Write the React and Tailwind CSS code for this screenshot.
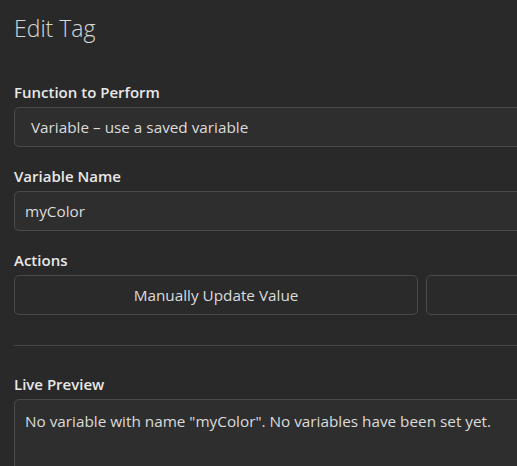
export default function App() {
  const font = { fontFamily: '"Open Sans", "Noto Sans", sans-serif' }

  return (
    <div style={font} className="h-[466px] w-[517px] overflow-hidden bg-[#292929] text-[#dcdcdc]">
      <div className="w-[844px] px-[14px] pt-[12px]">
        <h1 className="text-[23px] font-light leading-[32px] text-[#d6d6d6]">Edit Tag</h1>

        <div className="mt-[38px]">
          <label className="block text-[15px] font-semibold leading-[20px] text-[#e8e8e8]">Function to Perform</label>
          <div className="mt-[5px] flex h-[40px] items-center rounded-[5px] border border-[#4a4a4a] bg-[#2e2e2e] pl-[16px] text-[15.3px]">
            Variable – use a saved variable
          </div>
        </div>

        <div className="mt-[19px]">
          <label className="block text-[15px] font-semibold leading-[20px] text-[#e8e8e8]">Variable Name</label>
          <div className="mt-[5px] flex h-[40px] items-center rounded-[5px] border border-[#4a4a4a] bg-[#2e2e2e] pl-[10px] text-[15.3px]">
            myColor
          </div>
        </div>

        <div className="mt-[19px]">
          <label className="block text-[15px] font-semibold leading-[20px] text-[#e8e8e8]">Actions</label>
          <div className="mt-[5px] grid grid-cols-2 gap-[8px]">
            <button className="flex h-[40px] items-center justify-center rounded-[5px] border border-[#4a4a4a] bg-[#2a2a2a] text-[15.3px] text-[#dcdcdc]">
              Manually Update Value
            </button>
            <button className="flex h-[40px] items-center justify-center rounded-[5px] border border-[#4a4a4a] bg-[#2a2a2a] text-[15.3px] text-[#dcdcdc]"></button>
          </div>
        </div>

        <hr className="mt-[30px] border-t border-[#464646]" />

        <div className="mt-[28px]">
          <label className="block text-[15px] font-semibold leading-[20px] text-[#e8e8e8]">Live Preview</label>
          <div className="mt-[5px] h-[90px] rounded-[5px] border border-[#4a4a4a] bg-[#2e2e2e] px-[10px] pt-[10px] text-[15.3px] leading-[22px]">
            No variable with name "myColor". No variables have been set yet.
          </div>
        </div>
      </div>
    </div>
  )
}
